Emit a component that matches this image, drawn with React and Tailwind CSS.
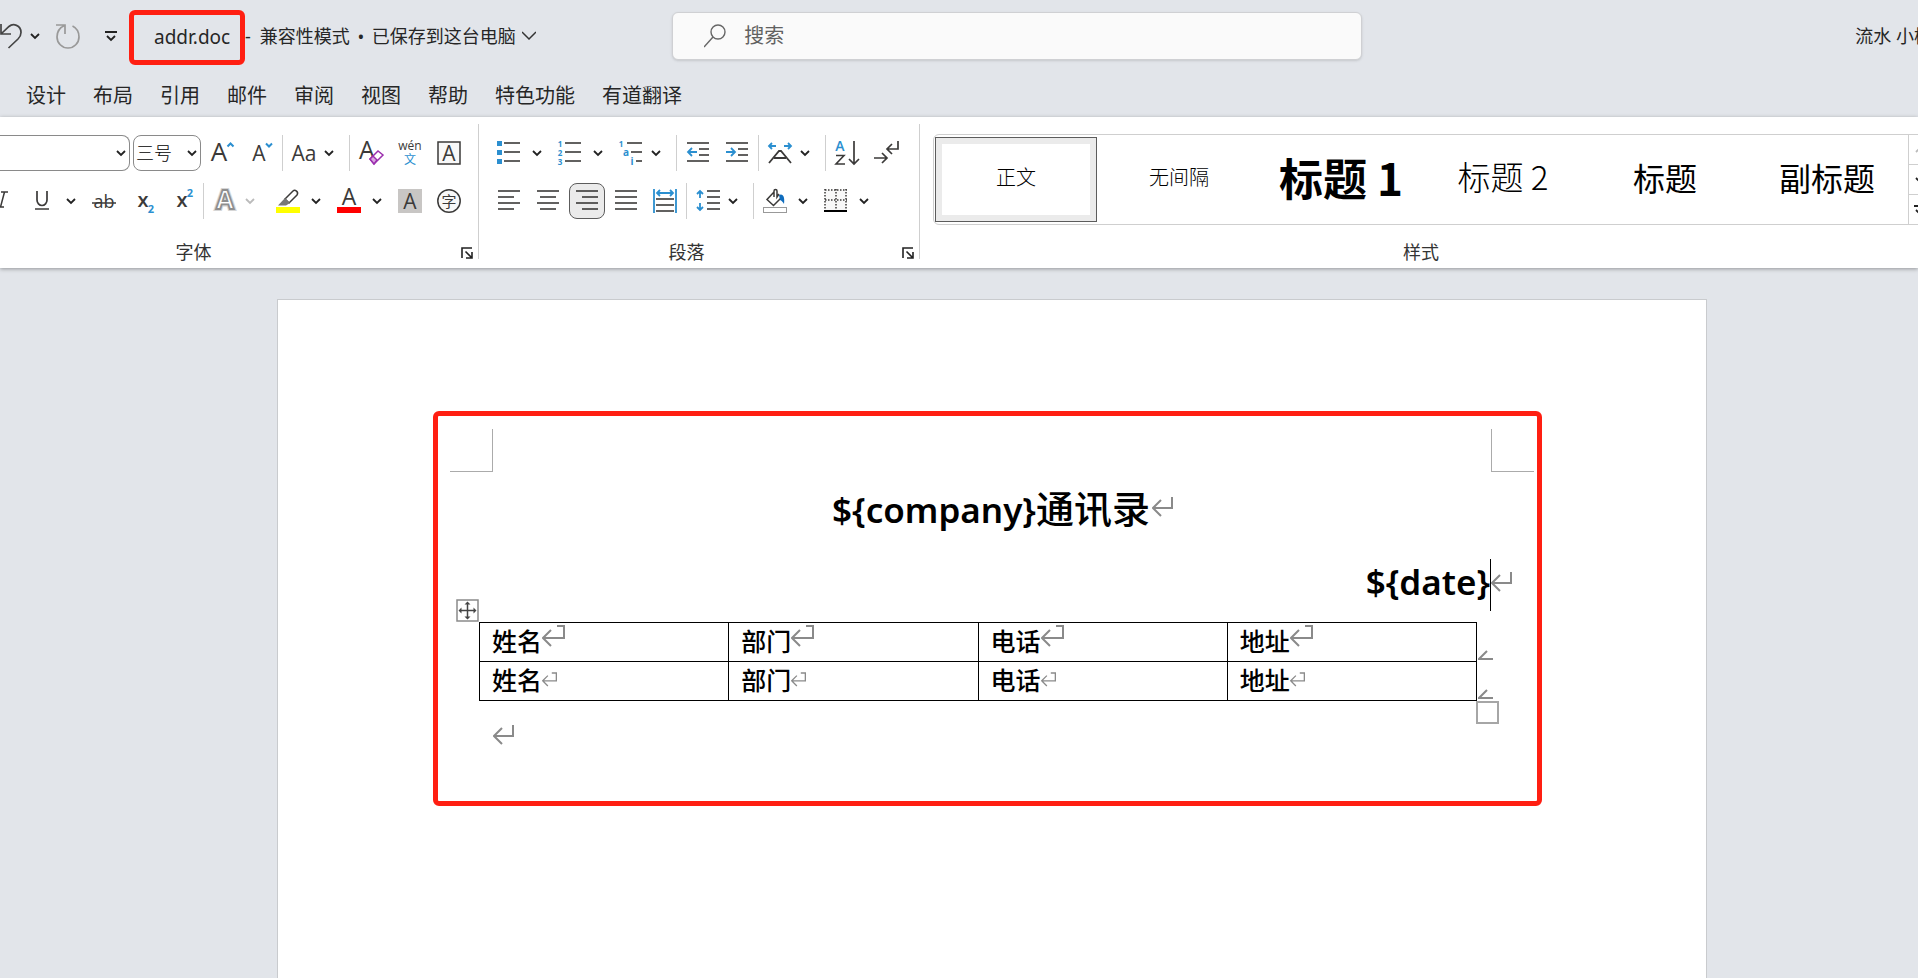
const UI_FONT = "font-['Noto_Sans','Noto_Sans_CJK_SC',sans-serif]"
const CJK_FONT = "font-['Noto_Sans_CJK_SC',sans-serif]"

const tabs = ['设计', '布局', '引用', '邮件', '审阅', '视图', '帮助', '特色功能', '有道翻译']

const styleItems = [
  { name: '正文', className: 'text-xl font-light' },
  { name: '无间隔', className: 'text-xl font-light' },
  { name: '标题 1', className: 'text-[44px] font-bold' },
  { name: '标题 2', className: 'text-[33px] font-light' },
  { name: '标题', className: 'text-[32px]' },
  { name: '副标题', className: 'text-[32px]' },
]

const columns = ['姓名', '部门', '电话', '地址']

function Chevron({ className = 'text-[#222]' }) {
  return (
    <svg width="10" height="10" viewBox="0 0 10 10" fill="none" stroke="currentColor" strokeWidth="1.8" className={className}>
      <path d="M1 3l4 4 4-4" />
    </svg>
  )
}

function Icon({ children }) {
  return (
    <svg width="24" height="24" viewBox="0 0 24 24" fill="none" stroke="#3b3a39" strokeWidth="1.5" className="shrink-0 overflow-visible">
      {children}
    </svg>
  )
}

function Letter({ x = 12, y, size, children, fill = '#3b3a39', weight = 400 }) {
  return (
    <text
      x={x} y={y} fontSize={size} fill={fill} stroke="none" fontWeight={weight} textAnchor="middle"
      fontFamily="Open Sans, Noto Sans CJK SC, sans-serif"
    >
      {children}
    </text>
  )
}

function ToolButton({ label, active, className = '', children }) {
  return (
    <button
      aria-label={label}
      aria-pressed={active}
      className={`flex h-9 w-9 shrink-0 items-center justify-center rounded-lg border ${
        active ? 'border-[#5c5c5c] bg-[#ebebeb]' : 'border-transparent hover:bg-gray-100'
      } ${className}`}
    >
      <Icon>{children}</Icon>
    </button>
  )
}

// icon and arrow are two separate click targets
function SplitButton({ label, children }) {
  return (
    <div className="flex h-9 w-[58px] shrink-0 items-center">
      <button aria-label={label} className="flex h-9 w-9 items-center justify-center">
        <Icon>{children}</Icon>
      </button>
      <button aria-label={`${label}选项`} className="flex h-9 w-5 items-center justify-center">
        <Chevron />
      </button>
    </div>
  )
}

function MenuButton({ label, muted, children }) {
  return (
    <button aria-label={label} className="flex h-9 w-[60px] shrink-0 items-center gap-2 pl-1.5">
      <Icon>{children}</Icon>
      <Chevron className={muted ? 'text-[#bbb]' : 'text-[#222]'} />
    </button>
  )
}

function Separator() {
  return <div className="h-9 w-px shrink-0 bg-[#cfcfcf]" />
}

function GroupDivider() {
  return <div className="mt-[7px] h-[135px] w-px shrink-0 bg-[#cfcfcf]" />
}

function Launcher({ label }) {
  return (
    <button aria-label={label} className="mt-1 h-3 w-3">
      <svg width="12" height="12" viewBox="0 0 12 12" fill="none" stroke="#222" strokeWidth="1.6">
        <path d="M1 11V1h10M4.500 4.500l6 6M5 11h6V5" />
      </svg>
    </button>
  )
}

function Lines({ rows }) {
  return rows.map(([x1, x2, y], i) => <path key={i} d={`M${x1} ${y}H${x2}`} strokeWidth="1.6" />)
}

function TitleBar() {
  return (
    <header className="grid h-[72px] grid-cols-[35%_36%_1fr] items-center text-lg leading-6 text-[#262626]">
      <div className="flex items-center whitespace-nowrap">
        <button aria-label="撤消" className="w-[23px]">
          <svg width="23" height="26" viewBox="0 0 23 26" fill="none" stroke="#444" strokeWidth="1.7">
            <path d="M1 1v10h10M1 11L9 3.500C13 0 21 2 21 9.500c0 3-1 4.500-3 6.500l-9.500 9" />
          </svg>
        </button>
        <button aria-label="撤消选项" className="ml-[7px]"><Chevron /></button>
        <button aria-label="重做" className="ml-4">
          <svg width="24" height="26" viewBox="0 0 24 26" fill="none" stroke="#999" strokeWidth="1.7">
            <path d="M0 2h9v9M8.500 2.500C4 4.500 1 9 1 14c0 6 5 11 11 11s11-5 11-11c0-5-2.500-9-6.500-11" />
          </svg>
        </button>
        <button aria-label="自定义快速访问工具栏" className="ml-[25px]">
          <svg width="12" height="12" viewBox="0 0 12 12" fill="none" stroke="#222" strokeWidth="1.8">
            <path d="M0 2h12M2 6l4 4 4-4" />
          </svg>
        </button>
        <div className="mt-0.5 ml-3 flex h-[55px] w-[116px] items-center rounded-md border-[5px] border-[#ff1f12] pl-5 text-[19px]">
          addr.doc
        </div>
        <span>-</span>
        <span className="ml-[9px]">兼容性模式</span>
        <span className="w-[22px] text-center">•</span>
        <button className="flex items-center gap-1.5">
          已保存到这台电脑
          <svg width="14" height="10" viewBox="0 0 14 10" fill="none" stroke="#333" strokeWidth="1.5">
            <path d="M0 1l7 7 7-7" />
          </svg>
        </button>
      </div>
      <label className="ml-px flex h-12 items-center rounded-md border border-[#cfd0d3] bg-[#fafafa] pl-[31px] shadow-sm">
        <svg width="22" height="24" viewBox="0 0 22 24" fill="none" stroke="#666" strokeWidth="1.4">
          <circle cx="14" cy="8" r="7" />
          <path d="M9 13L0 23" />
        </svg>
        <input type="search" aria-label="搜索" placeholder="搜索" className="ml-[18px] flex-1 bg-transparent text-xl outline-none placeholder:text-[#616161]" />
      </label>
      <div className="-mr-3.5 text-right whitespace-nowrap">流水 小杨</div>
    </header>
  )
}

function TabBar() {
  return (
    <nav className="flex h-[45px] items-center gap-[27px] pt-0.5 pl-[26px] text-xl leading-6 text-[#262626]">
      {tabs.map((tab) => (
        <button key={tab} className="whitespace-nowrap">{tab}</button>
      ))}
    </nav>
  )
}

function FontGroup() {
  return (
    <section className="flex w-[478px] shrink-0 flex-col pt-[18px]">
      <div className="flex gap-[3px]">
        <div className="relative h-9 w-[130px] shrink-0">
          <select aria-label="字体" className="h-9 w-full appearance-none rounded-r-lg border border-l-0 border-[#8a8a8a] bg-white">
            <option></option>
          </select>
          <span className="pointer-events-none absolute top-[13px] right-1"><Chevron /></span>
        </div>
        <div className="relative h-9 w-[68px] shrink-0">
          <select aria-label="字号" className="h-9 w-full appearance-none rounded-lg border border-[#8a8a8a] bg-white pl-0.5 text-lg font-light text-black">
            <option>三号</option>
          </select>
          <span className="pointer-events-none absolute top-[13px] right-1"><Chevron /></span>
        </div>
        <ToolButton label="增大字号">
          <Letter x={9} y={20} size={26}>A</Letter>
          <path d="M17.500 5.500l3-3 3 3" stroke="#2b8fd0" strokeWidth="2" />
        </ToolButton>
        <ToolButton label="减小字号">
          <Letter x={10} y={20} size={21}>A</Letter>
          <path d="M17 2.500l3 3 3-3" stroke="#2b8fd0" strokeWidth="2" />
        </ToolButton>
        <Separator />
        <MenuButton label="更改大小写">
          <Letter x={12} y={20} size={21}>Aa</Letter>
        </MenuButton>
        <Separator />
        <ToolButton label="清除所有格式">
          <Letter x={8} y={18} size={25}>A</Letter>
          <path d="M11 18l8-8 5 4-9 9z" fill="#fff" stroke="#9b2fae" />
          <path d="M11 18l3-3 4 4-3 4z" fill="#d9a6e0" stroke="#9b2fae" />
        </ToolButton>
        <ToolButton label="拼音指南">
          <Letter y={9} size={12}>wén</Letter>
          <Letter y={23} size={12} fill="#2b8fd0">文</Letter>
        </ToolButton>
        <ToolButton label="字符边框">
          <rect x="1" y="1" width="22" height="22" fill="#f8f8f8" />
          <Letter y={20} size={21}>A</Letter>
        </ToolButton>
      </div>
      <div className="mt-3 flex gap-[3px]">
        <ToolButton label="倾斜" className="-ml-3.5">
          <path d="M9 3h7M5 18h7M12.500 3l-4 15" />
        </ToolButton>
        <SplitButton label="下划线">
          <path d="M6 2v9a5 5.500 0 0 0 10 0V2M4 20h14" strokeWidth="1.7" />
        </SplitButton>
        <ToolButton label="删除线">
          <Letter y={19} size={18}>ab</Letter>
          <path d="M0 14h24" />
        </ToolButton>
        <ToolButton label="下标">
          <Letter y={18} size={20} weight={600}>x</Letter>
          <Letter x={20} y={24} size={11} weight={700} fill="#2b8fd0">2</Letter>
        </ToolButton>
        <ToolButton label="上标">
          <Letter y={18} size={20} weight={600}>x</Letter>
          <Letter x={20} y={8} size={11} weight={700} fill="#2b8fd0">2</Letter>
        </ToolButton>
        <Separator />
        <MenuButton label="文本效果" muted>
          <text x="12" y="20" fontSize="26" fontWeight="700" textAnchor="middle" fill="#fff" stroke="#d6d6d6" strokeWidth="4" fontFamily="Open Sans, sans-serif">A</text>
          <text x="12" y="20" fontSize="26" fontWeight="700" textAnchor="middle" fill="#fff" stroke="#8f8f8f" strokeWidth="1.8" fontFamily="Open Sans, sans-serif">A</text>
        </MenuButton>
        <SplitButton label="文本突出显示颜色">
          <path d="M9 10l8-8c2-2 6 1 4 4l-8 8z" />
          <path d="M9 9l5 5-4 2.500H2z" fill="#777" stroke="none" />
          <path d="M0 18h24v6H0z" fill="#ff0" stroke="none" />
        </SplitButton>
        <SplitButton label="字体颜色">
          <Letter y={16} size={23}>A</Letter>
          <path d="M0 18h24v6H0z" fill="#f00" stroke="none" />
        </SplitButton>
        <ToolButton label="字符底纹">
          <path d="M0 0h24v24H0z" fill="#c8c6c4" stroke="none" />
          <Letter y={20} size={21}>A</Letter>
        </ToolButton>
        <ToolButton label="带圈字符">
          <circle cx="12" cy="12" r="11.200" fill="#f8f8f8" />
          <Letter y={18} size={15}>字</Letter>
        </ToolButton>
      </div>
      <div className="mt-6 flex pr-[5px]">
        <span className="flex-1 pr-[74px] text-center text-lg leading-[18px] text-[#333]">字体</span>
        <Launcher label="字体设置" />
      </div>
    </section>
  )
}

function ParagraphGroup() {
  return (
    <section className="flex w-[440px] shrink-0 flex-col pt-[18px]">
      <div className="flex gap-[3px] pl-3">
        <SplitButton label="项目符号">
          <path d="M0 0h5v5H0zM0 9h5v5H0zM0 18h5v5H0z" fill="#2b8fd0" stroke="none" />
          <Lines rows={[[7, 23, 2], [7, 23, 11], [7, 23, 20]]} />
        </SplitButton>
        <SplitButton label="编号">
          <Letter x={2} y={6} size={8} weight={700} fill="#2b8fd0">1</Letter>
          <Letter x={2} y={15} size={8} weight={700} fill="#2b8fd0">2</Letter>
          <Letter x={2} y={24} size={8} weight={700} fill="#2b8fd0">3</Letter>
          <Lines rows={[[7, 23, 2], [7, 23, 11], [7, 23, 20]]} />
        </SplitButton>
        <MenuButton label="多级列表">
          <Letter x={2} y={6} size={8} weight={700} fill="#2b8fd0">1</Letter>
          <Letter x={7} y={15} size={10} weight={700} fill="#2b8fd0">a</Letter>
          <Letter x={13} y={24} size={10} weight={700} fill="#2b8fd0">i</Letter>
          <Lines rows={[[8, 23, 2], [12, 23, 11], [17, 23, 20]]} />
        </MenuButton>
        <Separator />
        <ToolButton label="减少缩进量">
          <Lines rows={[[1, 23, 2], [13, 23, 8], [13, 23, 14], [1, 23, 20]]} />
          <path d="M11 11H2M6 7l-4 4 4 4" stroke="#2b8fd0" strokeWidth="1.8" />
        </ToolButton>
        <ToolButton label="增加缩进量">
          <Lines rows={[[1, 23, 2], [13, 23, 8], [13, 23, 14], [1, 23, 20]]} />
          <path d="M1 11h9M6 7l4 4-4 4" stroke="#2b8fd0" strokeWidth="1.8" />
        </ToolButton>
        <Separator />
        <MenuButton label="中文版式">
          <path d="M1 22L11 10h2l10 12M6 17h12" strokeWidth="1.8" />
          <path d="M8 5H1M4 2L1 5l3 3M16 5h7M20 2l3 3-3 3" stroke="#2b8fd0" strokeWidth="1.8" />
        </MenuButton>
        <Separator />
        <ToolButton label="排序">
          <Letter x={5} y={10} size={14} weight={600} fill="#2b8fd0">A</Letter>
          <path d="M1 14.500h8L1 23h9" strokeWidth="1.6" />
          <path d="M19 0v22M14 18l5 5 5-5" strokeWidth="1.7" />
        </ToolButton>
        <ToolButton label="显示编辑标记">
          <path d="M24 0v8H13M18 3l-5 5 5 5M0 17h13M8 12l5 5-5 5" strokeWidth="1.7" />
        </ToolButton>
      </div>
      <div className="mt-3 flex gap-[3px] pl-3">
        <ToolButton label="左对齐"><Lines rows={[[1, 23, 2], [1, 17, 8], [1, 23, 14], [1, 17, 20]]} /></ToolButton>
        <ToolButton label="居中"><Lines rows={[[1, 23, 2], [4, 20, 8], [1, 23, 14], [4, 20, 20]]} /></ToolButton>
        <ToolButton label="右对齐" active><Lines rows={[[1, 23, 2], [7, 23, 8], [1, 23, 14], [7, 23, 20]]} /></ToolButton>
        <ToolButton label="两端对齐"><Lines rows={[[1, 23, 2], [1, 23, 8], [1, 23, 14], [1, 23, 20]]} /></ToolButton>
        <ToolButton label="分散对齐">
          <Lines rows={[[3, 21, 10], [3, 21, 16], [3, 21, 22]]} />
          <path d="M1 0v24M23 0v24M4 4h16M7 1L4 4l3 3M17 1l3 3-3 3" stroke="#2b8fd0" strokeWidth="1.8" />
        </ToolButton>
        <Separator />
        <MenuButton label="行和段落间距">
          <Lines rows={[[11, 24, 2], [11, 24, 8], [11, 24, 14], [11, 24, 20]]} />
          <path d="M4 9V2M1 5l3-3 3 3M4 14v7M1 18l3 3 3-3" stroke="#2b8fd0" strokeWidth="1.8" />
        </MenuButton>
        <Separator />
        <SplitButton label="底纹">
          <path d="M11 3L4 10.500l6.500 6L19 8M11 8V2c0-2 3-2 3 0v6l2-3" />
          <path d="M16 6c4-2 6 2 5 9-1-2-2-3-4-4z" fill="#0f6cbd" stroke="none" />
          <rect x="0.500" y="18.500" width="23" height="5" fill="#fff" stroke="#999" strokeWidth="1" />
        </SplitButton>
        <SplitButton label="边框">
          <path d="M1 1h22v20H1z" fill="#f8f8f8" stroke="none" />
          <path d="M1 1h22M1 11h22M1 0v20M12 0v20M22 0v20" strokeDasharray="1.5 1.5" />
          <path d="M0 22h23" stroke="#000" strokeWidth="2" />
        </SplitButton>
      </div>
      <div className="mt-6 flex pr-[5px]">
        <span className="flex-1 pr-2 text-center text-lg leading-[18px] text-[#333]">段落</span>
        <Launcher label="段落设置" />
      </div>
    </section>
  )
}

function StylesGroup() {
  return (
    <section className="flex min-w-0 flex-1 flex-col overflow-hidden pt-[17px]">
      <div className="ml-[13px] flex h-[91px] w-max rounded-md border border-[#cfcfcf]">
        {styleItems.map((item, i) => (
          <button
            key={item.name}
            className={`flex w-[162px] items-center justify-center pb-1.5 whitespace-nowrap text-black ${CJK_FONT} ${item.className} ${
              i === 0 ? 'mx-px my-0.5 border border-[#5c5c5c] ring-6 ring-[#ebebeb] ring-inset' : ''
            }`}
          >
            {item.name}
          </button>
        ))}
        <div className="flex w-7 flex-col border-l border-[#cfcfcf]">
          <button aria-label="上一行" className="flex flex-1 items-center pl-1.5"><svg width="10" height="10" viewBox="0 0 10 10" fill="none" stroke="#bbb" strokeWidth="1.8"><path d="M1 7l4-4 4 4" /></svg></button>
          <button aria-label="下一行" className="flex flex-1 items-center border-y border-[#cfcfcf] pl-1.5"><Chevron /></button>
          <button aria-label="其他样式" className="flex flex-1 items-center pl-[5px]"><svg width="12" height="12" viewBox="0 0 12 12" fill="none" stroke="#222" strokeWidth="1.8"><path d="M0 2h12M2 6l4 4 4-4" /></svg></button>
        </div>
      </div>
      <span className="mt-[18px] pl-1 text-center text-lg leading-[18px] text-[#333]">样式</span>
    </section>
  )
}

function ReturnMark({ small, hooked }) {
  const d = hooked ? 'M15 1h7v12H1M9 5l-8 8 8 8' : 'M20 0v11H1M9 3l-8 8 8 8'
  return (
    <svg
      width={small ? 15 : 23} height={small ? 15 : 22} viewBox="0 0 23 22"
      fill="none" stroke="#8a8a8a" strokeWidth={2} className="shrink-0"
    >
      <path d={d} />
    </svg>
  )
}

function RowEndMark() {
  return (
    <svg width="15" height="11" viewBox="0 0 15 11" fill="none" stroke="#8a8a8a" strokeWidth="2" className="absolute right-[-17px] bottom-0">
      <path d="M9 1L1 9h14" />
    </svg>
  )
}

function AddressTable() {
  return (
    <div className="relative mr-[60px] ml-[41px]">
      <svg width="23" height="23" viewBox="0 0 23 23" fill="#fff" stroke="#8a8a8a" className="absolute -top-[23px] -left-[23px]">
        <rect x="1" y="1" width="21" height="21" strokeWidth="1.5" />
        <path d="M11.500 4v15M4 11.500h15" stroke="#444" strokeWidth="1.5" />
        <path d="M11.500 2.500l3 3h-6zM11.500 20.500l3-3h-6zM2.500 11.500l3-3v6zM20.500 11.500l-3-3v6z" fill="#444" stroke="none" />
      </svg>
      <table className="w-full table-fixed border-collapse text-[25px] leading-8 font-medium">
        <tbody>
          {[0, 1].map((row) => (
            <tr key={row}>
              {columns.map((name, i) => (
                <td key={name} className="relative h-[39px] border border-black p-0 pl-3">
                  <div className="flex h-[38px] items-center pb-1">
                    {name}
                    <ReturnMarkCell first={row === 0} />
                  </div>
                  {i === columns.length - 1 && <RowEndMark />}
                </td>
              ))}
            </tr>
          ))}
        </tbody>
      </table>
      <div className="absolute -right-[22px] -bottom-[23px] h-[23px] w-[23px] border-2 border-[#a6a6a6] bg-white" />
    </div>
  )
}

function ReturnMarkCell({ first }) {
  return (
    <span className={first ? 'mb-2' : ''}>
      <ReturnMark hooked small={!first} />
    </span>
  )
}

function DocumentPage() {
  return (
    <article className={`flex-1 border border-b-0 border-[#c9cbce] bg-white pt-[111px] pr-[164px] pl-[155px] text-black ${CJK_FONT}`}>
      <div className="h-[395px] rounded-md border-[5px] border-[#ff1f12] pt-[13px]">
        <div className="flex justify-between pr-[3px] pl-3">
          <div className="h-[43px] w-[43px] border-r border-b border-[#ababab]" />
          <div className="h-[43px] w-[43px] border-b border-l border-[#ababab]" />
        </div>
        <div className="pr-[46px] pl-[55px] text-[38px] font-medium">
          <h1 className="flex h-[75px] items-center justify-center pb-1">
            <span>
              <span className={`text-[35px] font-semibold ${UI_FONT}`}>{'${company}'}</span>
              通讯录
            </span>
            <span className="w-0 pl-0.5"><ReturnMark /></span>
          </h1>
          <p className="flex h-[75px] items-center justify-end">
            <span className={`pb-1 text-[35px] font-semibold ${UI_FONT}`}>{'${date}'}</span>
            <span className="h-[52px] w-px bg-black" />
            <span className="w-0 pb-1"><ReturnMark /></span>
          </p>
        </div>
        <AddressTable />
        <p className="flex h-[70px] items-center pl-[55px]"><ReturnMark /></p>
      </div>
    </article>
  )
}

export default function App() {
  return (
    <div className={`flex min-h-screen flex-col overflow-hidden bg-[#e2e5ea] ${UI_FONT}`}>
      <TitleBar />
      <TabBar />
      <div className="flex h-[151px] bg-white shadow-[0_1px_4px_rgba(0,0,0,0.35)]">
        <FontGroup />
        <GroupDivider />
        <ParagraphGroup />
        <GroupDivider />
        <StylesGroup />
      </div>
      <main className="flex flex-1 pt-[31px] pr-[211px] pl-[277px]">
        <DocumentPage />
      </main>
    </div>
  )
}
